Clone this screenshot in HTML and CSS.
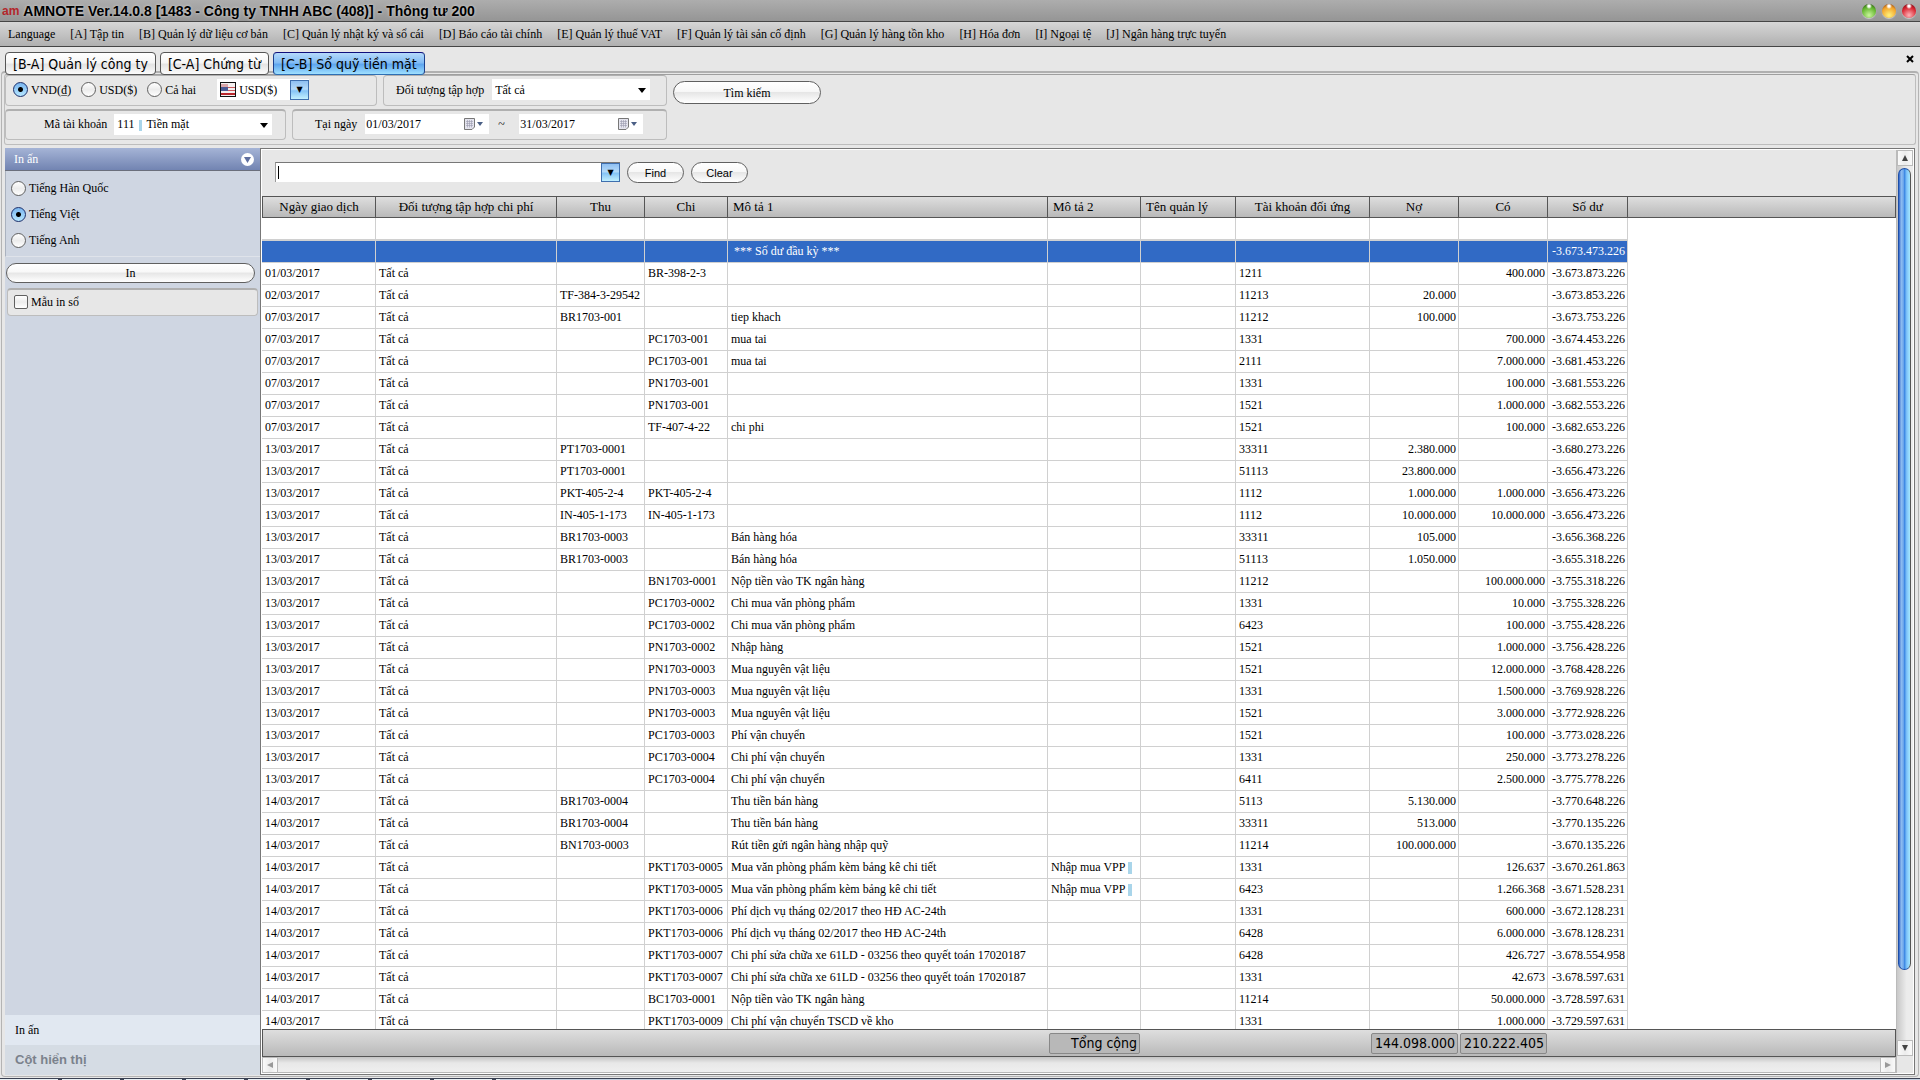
FILE: index.html
```
<!DOCTYPE html>
<html lang="vi">
<head>
    <meta charset="utf-8">
    <title>AMNOTE Ver.14.0.8</title>
    <link rel="stylesheet" href="styles.css">
    <script src="script.js"></script>
</head>
<body>
    <header class="titleBar">
        <span class="logo">am</span>
        <h1>AMNOTE Ver.14.0.8 [1483 - Công ty TNHH ABC (408)] - Thông tư 200</h1>
        <button class="orb green" aria-label="Minimize"></button>
        <button class="orb yellow" aria-label="Maximize"></button>
        <button class="orb red" aria-label="Close"></button>
    </header>

    <nav class="menu">
        <a href="#">Language</a>
        <a href="#">[A] Tập tin</a>
        <a href="#">[B] Quản lý dữ liệu cơ bản</a>
        <a href="#">[C] Quản lý nhật ký và sổ cái</a>
        <a href="#">[D] Báo cáo tài chính</a>
        <a href="#">[E] Quản lý thuế VAT</a>
        <a href="#">[F] Quản lý tài sản cố định</a>
        <a href="#">[G] Quản lý hàng tồn kho</a>
        <a href="#">[H] Hóa đơn</a>
        <a href="#">[I] Ngoại tệ</a>
        <a href="#">[J] Ngân hàng trực tuyến</a>
    </nav>

    <div class="tabs">
        <button class="tab">[B-A] Quản lý công ty</button>
        <button class="tab">[C-A] Chứng từ</button>
        <button class="tab active">[C-B] Sổ quỹ tiền mặt</button>
        <button class="closeTab" aria-label="Close tab">
            <svg width="8" height="8" viewBox="0 0 8 8"><path d="M1 1L7 7M7 1L1 7" stroke="#000" stroke-width="2"/></svg>
        </button>
    </div>

    <main class="page">
        <form class="filters">
            <div class="filterRow">
                <div class="group currency">
                    <label><input type="radio" name="currency" checked>VND(₫)</label>
                    <label><input type="radio" name="currency">USD($)</label>
                    <label><input type="radio" name="currency">Cả hai</label>
                    <div class="combo flagCombo">
                        <svg class="flag" width="16" height="15" viewBox="0 0 16 15">
                            <rect width="16" height="15" fill="#111"/>
                            <rect x="1" y="1" width="14" height="13" fill="#f4f0f0"/>
                            <path d="M1 2H8V5H1Z" fill="#d9a5a8"/>
                            <path d="M1 12H15" stroke="#b9262c" stroke-width="2"/>
                            <path d="M8 5.500H15M8 8.500H15" stroke="#c9585c"/>
                            <rect x="1" y="5" width="7" height="4" fill="#4a5a94"/>
                        </svg>
                        <select aria-label="Ngoại tệ"><option>USD($)</option></select>
                        <span class="blueArrow">▼</span>
                    </div>
                </div>
                <div class="group target">
                    <label for="target">Đối tượng tập hợp</label>
                    <div class="combo wide">
                        <select id="target"><option>Tất cả</option></select>
                        <span class="arrow"></span>
                    </div>
                </div>
            </div>
            <div class="filterRow">
                <div class="group account">
                    <label for="account">Mã tài khoản</label>
                    <div class="combo wide">
                        <select id="account" class="barred"><option>111&nbsp;&nbsp;&nbsp;&nbsp;Tiền mặt</option></select>
                        <span class="arrow"></span>
                    </div>
                </div>
                <div class="group period">
                    <label for="dateFrom">Tại ngày</label>
                    <div class="date">
                        <input type="text" id="dateFrom" value="01/03/2017">
                        <svg width="19" height="13" viewBox="0 0 19 13">
                            <path d="M.5 .5H10.500V9L8 11.500H.5Z" fill="#e4e4ee" stroke="#777"/>
                            <path d="M2 3.500H9M2 5.500H9M2 7.500H9M3.500 2V9.500M5.500 2V9.500M7.500 2V9.500" stroke="#9a9aae" stroke-width=".6"/>
                            <path d="M13 4H19L16 8Z" fill="#4a5f85"/>
                        </svg>
                    </div>
                    <span class="tilde">~</span>
                    <div class="date">
                        <input type="text" aria-label="Đến ngày" value="31/03/2017">
                        <svg width="19" height="13" viewBox="0 0 19 13">
                            <path d="M.5 .5H10.500V9L8 11.500H.5Z" fill="#e4e4ee" stroke="#777"/>
                            <path d="M2 3.500H9M2 5.500H9M2 7.500H9M3.500 2V9.500M5.500 2V9.500M7.500 2V9.500" stroke="#9a9aae" stroke-width=".6"/>
                            <path d="M13 4H19L16 8Z" fill="#4a5f85"/>
                        </svg>
                    </div>
                </div>
            </div>
            <button type="button" class="pill search">Tìm kiếm</button>
        </form>

        <div class="content">
            <aside class="sidebar">
                <div class="sideHeader">
                    In ấn
                    <svg width="13" height="13" viewBox="0 0 13 13"><circle cx="6.500" cy="6.500" r="6.500" fill="#fff"/><path d="M3 4H10L6.500 10Z" fill="#5f6fa0"/></svg>
                </div>
                <div class="languages">
                    <label><input type="radio" name="lang">Tiếng Hàn Quốc</label>
                    <label><input type="radio" name="lang" checked>Tiếng Việt</label>
                    <label><input type="radio" name="lang">Tiếng Anh</label>
                </div>
                <button class="pill print">In</button>
                <div class="group template">
                    <label><input type="checkbox">Mẫu in sổ</label>
                </div>
                <div class="sideTabs">
                    <button class="sideTab current">In ấn</button>
                    <button class="sideTab">Cột hiển thị</button>
                </div>
            </aside>

            <section class="ledger">
                <div class="ledgerMain">
                    <div class="find">
                        <div class="combo findBox">
                            <input type="text" aria-label="Find">
                            <button class="blueArrow" aria-label="History">▼</button>
                        </div>
                        <button class="pill small">Find</button>
                        <button class="pill small">Clear</button>
                    </div>
                    <div class="rows">
                        <table>
                            <colgroup class="cols"></colgroup>
                            <thead>
                                <tr>
                                    <th>Ngày giao dịch</th>
                                    <th>Đối tượng tập hợp chi phí</th>
                                    <th>Thu</th>
                                    <th>Chi</th>
                                    <th class="left">Mô tả 1</th>
                                    <th class="left">Mô tả 2</th>
                                    <th class="left">Tên quản lý</th>
                                    <th>Tài khoản đối ứng</th>
                                    <th>Nợ</th>
                                    <th>Có</th>
                                    <th>Số dư</th>
                                    <th></th>
                                </tr>
                            </thead>
                            <tbody id="ledgerRows"></tbody>
                        </table>
                    </div>
                    <table class="totals">
                        <colgroup class="cols"></colgroup>
                        <tbody>
                            <tr>
                                <td colspan="5"></td>
                                <td><div class="total">Tổng cộng</div></td>
                                <td colspan="2"></td>
                                <td><div class="total">144.098.000</div></td>
                                <td><div class="total">210.222.405</div></td>
                                <td colspan="2"></td>
                            </tr>
                        </tbody>
                    </table>
                    <div class="hScroll">
                        <button aria-label="Scroll left"><svg width="6" height="6" viewBox="0 0 6 6"><path d="M6 0V6L0 3Z"/></svg></button>
                        <button aria-label="Scroll right"><svg width="6" height="6" viewBox="0 0 6 6"><path d="M0 0V6L6 3Z"/></svg></button>
                    </div>
                </div>
                <div class="vScroll">
                    <button aria-label="Scroll up"><svg width="6" height="6" viewBox="0 0 6 6"><path d="M0 6H6L3 0Z"/></svg></button>
                    <div class="track"><div class="thumb"></div></div>
                    <button aria-label="Scroll down"><svg width="6" height="6" viewBox="0 0 6 6"><path d="M0 0H6L3 6Z"/></svg></button>
                </div>
            </section>
        </div>
    </main>
    <footer class="taskbar"><div></div></footer>
</body>
</html>
```
FILE: styles.css
```
* {
    box-sizing: border-box;
}
body {
    margin: 0;
    height: 100vh;
    display: flex;
    flex-direction: column;
    overflow: hidden;
    background: #e7e7e7;
    color: #000;
    font: 12px/16px "Liberation Serif", serif;
}
button, input, select {
    margin: 0;
    padding: 0;
    border: 0;
    border-radius: 0;
    outline: none;
    color: inherit;
    font: inherit;
    appearance: none;
}
svg {
    display: block;
    flex: none;
}

/* window chrome */
.titleBar {
    display: flex;
    align-items: center;
    gap: 6px;
    height: 22px;
    padding: 0 4px 0 2px;
    border-bottom: 1px solid #454545;
    background: linear-gradient(#adadad, #959595);
}
.logo {
    color: #b3262b;
    font: bold 12px/20px "Liberation Sans", sans-serif;
    margin-right: -2px;
}
.titleBar h1 {
    flex: 1;
    margin: 0;
    font: bold 14px/20px "Liberation Sans", sans-serif;
    text-shadow: 0 0 3px #ddd;
}
.orb {
    width: 14px;
    height: 14px;
    border-radius: 50%;
    box-shadow: 0 1px 1px #ccc;
}
.green {
    background: radial-gradient(circle at 50% 15%, #fff 1px, transparent 3px), radial-gradient(circle at 50% 80%, #c9f59b, #62b52d 60%, #1c3f0e);
}
.yellow {
    background: radial-gradient(circle at 50% 15%, #fff 1px, transparent 3px), radial-gradient(circle at 50% 80%, #fff27c, #f3a52b 60%, #7c2b0c);
}
.red {
    background: radial-gradient(circle at 50% 15%, #fff 1px, transparent 3px), radial-gradient(circle at 50% 80%, #ffb3b8, #d8232f 60%, #5c0710);
}
.menu {
    display: flex;
    gap: 15px;
    height: 25px;
    padding: 4px 8px;
    border-bottom: 1px solid #454545;
    background: linear-gradient(#d6d6d6, #b0b0b0);
}
.menu a {
    color: #000;
    text-decoration: none;
}
.tabs {
    display: flex;
    gap: 4px;
    height: 24px;
    padding: 5px 5px 0;
}
.tab {
    position: relative;
    z-index: 1;
    height: 23px;
    padding: 0 7px;
    border: 1px solid #555;
    border-radius: 4px;
    background: linear-gradient(#fff, #f6f6f6 45%, #e4e4e4 55%, #fbfbfb);
    font: 14px/20px "DejaVu Sans Condensed", "DejaVu Sans", sans-serif;
}
.tab.active {
    border-color: #10107c #1b3f8c #2e6fb4;
    background: linear-gradient(#b5dafb, #84bdf5 45%, #5fa6ef 55%, #9fe0ff);
}
.closeTab {
    height: 14px;
    margin-left: auto;
    padding: 0 1px;
    background: none;
}

/* filters */
.page {
    flex: 1;
    min-height: 0;
    display: flex;
    flex-direction: column;
    margin: 0 1px;
    padding: 1px 3px;
    border: 1px solid #b4b4b4;
    border-top: 2px solid #b0b0b0;
    border-radius: 4px;
}
.filters {
    position: relative;
    display: flex;
    flex-direction: column;
    gap: 3px;
    height: 71px;
    margin: 0 -1px 3px;
    border: 1px solid #bdbdbd;
    border-top-color: #9f9f9f;
    border-radius: 3px;
}
.filterRow {
    display: flex;
    gap: 6px;
}
.group {
    display: flex;
    align-items: center;
    height: 31px;
    padding-bottom: 2px;
    border: 1px solid #bdbdbd;
    border-top: 2px solid #b0b0b0;
    border-radius: 4px;
    background: #e7e7e7;
}
.filterRow:first-child .group {
    border-top-width: 1px;
}
.currency {
    width: 372px;
    padding-left: 7px;
}
.target {
    width: 284px;
    padding-left: 12px;
    gap: 8px;
}
.account {
    width: 281px;
    padding-left: 38px;
    gap: 7px;
}
.period {
    width: 375px;
    padding-left: 22px;
}
.period label {
    margin-right: 8px;
}
.currency label, .languages label, .template label {
    display: flex;
    align-items: center;
    gap: 3px;
}
.currency label {
    margin-right: 10px;
}
input[type="radio"] {
    width: 15px;
    height: 15px;
    border: 1px solid #606060;
    border-radius: 50%;
    background: linear-gradient(#fff, #ececec 50%, #fff);
}
input[type="radio"]:checked {
    border-color: #1b2f6b;
    background: radial-gradient(circle, #000 2px, transparent 3px), linear-gradient(#7ab6f0, #b5e6ff);
}
input[type="checkbox"] {
    width: 14px;
    height: 14px;
    border: 1px solid #606060;
    border-radius: 2px;
    background: linear-gradient(#fff, #ececec 50%, #fff);
}
.combo {
    position: relative;
    display: flex;
    height: 21px;
    background: #fff;
}
.combo select {
    flex: 1;
    min-width: 0;
    padding: 0 3px;
    background: #fff;
}
.combo.wide {
    width: 158px;
}
.combo select.barred {
    background: linear-gradient(#a9d5ea, #a9d5ea) 25px 6px / 3px 11px no-repeat #fff;
}
.arrow {
    position: absolute;
    right: 4px;
    top: 9px;
    border: 4px solid transparent;
    border-top: 5px solid #000;
    border-bottom: 0;
}
.flagCombo {
    width: 92px;
    margin-left: 11px;
    padding-left: 3px;
    align-items: center;
}
.blueArrow {
    width: 19px;
    height: 20px;
    border: 1px solid #3f6fae;
    background: linear-gradient(#8fc0f2, #b4dafa 45%, #86c4f6 55%, #c2f0ff);
    font: 8px/18px "DejaVu Sans", sans-serif;
    text-align: center;
}
.date {
    display: flex;
    align-items: center;
    width: 124px;
    height: 20px;
    padding: 0 6px 0 1px;
    background: #fff;
}
.date input {
    flex: 1;
    min-width: 0;
}
.tilde {
    width: 30px;
    padding-left: 9px;
}
.pill {
    border: 1px solid #606060;
    border-radius: 12px;
    background: linear-gradient(#fff, #f8f8f8 45%, #e6e6e6 50%, #fff);
    text-align: center;
}
.search {
    position: absolute;
    left: 668px;
    top: 6px;
    width: 148px;
    height: 23px;
}

/* sidebar */
.content {
    flex: 1;
    min-height: 0;
    display: flex;
}
.sidebar {
    display: flex;
    flex-direction: column;
    width: 255px;
    background: #cfd6e2;
}
.sideHeader {
    display: flex;
    align-items: center;
    justify-content: space-between;
    height: 23px;
    padding: 0 6px 0 9px;
    border-bottom: 1px solid #6b6f7c;
    background: linear-gradient(#a5b4d6, #7284b2);
    color: #fff;
}
.languages {
    display: flex;
    flex-direction: column;
    gap: 10px;
    height: 86px;
    padding: 9px 5px;
    border-left: 1px solid #aab2bf;
    border-bottom: 1px solid #dfe3ea;
}
.print {
    height: 20px;
    margin: 6px 5px 5px 1px;
}
.template {
    height: 28px;
    margin: 0 2px;
    padding-left: 6px;
}
.sideTabs {
    display: flex;
    flex-direction: column;
    margin-top: auto;
}
.sideTab {
    height: 30px;
    padding-left: 10px;
    background: #d5dce4;
    color: #7b828c;
    font: bold 13px/16px "Liberation Sans", sans-serif;
    text-align: left;
}
.sideTab.current {
    background: #e1e8f1;
    color: #000;
    font: 12px/16px "Liberation Serif", serif;
}

/* ledger */
.ledger {
    flex: 1;
    min-width: 0;
    display: flex;
    border: 1px solid #777;
    padding: 1px;
    background: #fff;
}
.ledgerMain {
    flex: 1;
    min-width: 0;
    display: flex;
    flex-direction: column;
}
.find {
    display: flex;
    gap: 7px;
    height: 46px;
    padding: 12px 13px;
    background: #e7e7e7;
}
.findBox {
    width: 345px;
    height: 20px;
    border-top: 1px solid #777;
    border-left: 1px solid #999;
}
.findBox input {
    flex: 1;
    background: linear-gradient(#000, #000) 2px 3px / 1px 13px no-repeat #fff;
}
.findBox .blueArrow {
    height: 19px;
}
.small {
    width: 57px;
    height: 21px;
    font: 11px/16px "Liberation Sans", sans-serif;
}
.rows {
    flex: 1;
    min-height: 0;
    overflow: hidden;
}
table {
    width: 100%;
    table-layout: fixed;
    border-collapse: separate;
    border-spacing: 0;
}
th {
    height: 22px;
    padding: 0 5px;
    border: 1px solid #555;
    border-left: 0;
    background: linear-gradient(#dedede, #b9b9b9);
    font-size: 13px;
    font-weight: normal;
    line-height: 18px;
}
th:first-child {
    border-left: 1px solid #555;
}
th.left {
    text-align: left;
}
.rows td {
    height: 22px;
    padding: 0 2px 2px 3px;
    border-right: 1px solid #d0d0d0;
    border-bottom: 1px solid #d0d0d0;
    line-height: 16px;
    white-space: pre;
}
.rows td:last-child {
    border: 0;
}
.rows .filterLine td {
    height: 23px;
    border-bottom-width: 2px;
}
.rows .filterLine td:last-child {
    border: 0;
}
.rows .selected td {
    background: #316ac5;
    color: #fff;
}
.rows .selected td:last-child {
    background: none;
}
.rows .num {
    text-align: right;
}
.bar {
    display: inline-block;
    width: 4px;
    height: 12px;
    margin-left: 3px;
    background: #a9d5ea;
    vertical-align: middle;
}
.totals {
    height: 28px;
    border: 1px solid #555;
    background: linear-gradient(#dedede, #b9b9b9);
}
.totals td {
    padding: 0 2px 0 0;
}
.total {
    height: 21px;
    padding-right: 2px;
    border: 1px solid #888;
    border-radius: 2px;
    background: #b8b8b8;
    font: 14px/19px "DejaVu Sans Condensed", "DejaVu Sans", sans-serif;
    text-align: right;
}
.hScroll {
    display: flex;
    justify-content: space-between;
    height: 16px;
    background: linear-gradient(#c4c4c4, #e8e8e8 40%, #efefef);
    border-bottom: 1px solid #b8b8b8;
}
.hScroll button, .vScroll button {
    display: flex;
    align-items: center;
    justify-content: center;
    width: 16px;
    height: 16px;
    border: 1px solid #bbb;
    background: linear-gradient(90deg, #fafafa, #ececec 50%, #fafafa);
    fill: #444;
}
.hScroll button {
    fill: #999;
}
.vScroll {
    display: flex;
    flex-direction: column;
    width: 17px;
    padding-bottom: 17px;
    border-left: 1px solid #bbb;
    background: #e7e7e7;
}
.track {
    flex: 1;
    padding: 2px 2px 0 1px;
    background: linear-gradient(90deg, #c8c8c8, #ececec 60%);
}
.thumb {
    width: 13px;
    height: 92%;
    border: 1px solid #1d4fa8;
    border-right-color: #555;
    border-radius: 7px;
    background: linear-gradient(90deg, #2f62c8, #8fbdf0 20%, #6fa8ec 40%, #3f8ae4 50%, #7fc4fa 70%, #a5e8ff);
}
.taskbar {
    height: 3px;
    padding-top: 1px;
}
.taskbar div {
    height: 2px;
    border-top: 1px solid #3b4253;
    background: repeating-linear-gradient(90deg, #e8f0f4 0 58px, #3b4253 58px 62px) 0 0 / 500px 1px no-repeat #c3d0e0;
}
```
FILE: script.js
```
"use strict"
window.addEventListener("load", () => {

    const widths = [114, 181, 88, 83, 320, 93, 95, 134, 89, 89, 80]

    // date, thu, chi, mo ta 1, mo ta 2, tai khoan, no, co, so du
    const rows = [
        ["01/03/2017", "", "BR-398-2-3", "", "", "1211", "", "400.000", "-3.673.873.226"],
        ["02/03/2017", "TF-384-3-29542", "", "", "", "11213", "20.000", "", "-3.673.853.226"],
        ["07/03/2017", "BR1703-001", "", "tiep khach", "", "11212", "100.000", "", "-3.673.753.226"],
        ["07/03/2017", "", "PC1703-001", "mua tai", "", "1331", "", "700.000", "-3.674.453.226"],
        ["07/03/2017", "", "PC1703-001", "mua tai", "", "2111", "", "7.000.000", "-3.681.453.226"],
        ["07/03/2017", "", "PN1703-001", "", "", "1331", "", "100.000", "-3.681.553.226"],
        ["07/03/2017", "", "PN1703-001", "", "", "1521", "", "1.000.000", "-3.682.553.226"],
        ["07/03/2017", "", "TF-407-4-22", "chi phi", "", "1521", "", "100.000", "-3.682.653.226"],
        ["13/03/2017", "PT1703-0001", "", "", "", "33311", "2.380.000", "", "-3.680.273.226"],
        ["13/03/2017", "PT1703-0001", "", "", "", "51113", "23.800.000", "", "-3.656.473.226"],
        ["13/03/2017", "PKT-405-2-4", "PKT-405-2-4", "", "", "1112", "1.000.000", "1.000.000", "-3.656.473.226"],
        ["13/03/2017", "IN-405-1-173", "IN-405-1-173", "", "", "1112", "10.000.000", "10.000.000", "-3.656.473.226"],
        ["13/03/2017", "BR1703-0003", "", "Bán hàng hóa", "", "33311", "105.000", "", "-3.656.368.226"],
        ["13/03/2017", "BR1703-0003", "", "Bán hàng hóa", "", "51113", "1.050.000", "", "-3.655.318.226"],
        ["13/03/2017", "", "BN1703-0001", "Nộp tiền vào TK ngân hàng", "", "11212", "", "100.000.000", "-3.755.318.226"],
        ["13/03/2017", "", "PC1703-0002", "Chi mua văn phòng phẩm", "", "1331", "", "10.000", "-3.755.328.226"],
        ["13/03/2017", "", "PC1703-0002", "Chi mua văn phòng phẩm", "", "6423", "", "100.000", "-3.755.428.226"],
        ["13/03/2017", "", "PN1703-0002", "Nhập hàng", "", "1521", "", "1.000.000", "-3.756.428.226"],
        ["13/03/2017", "", "PN1703-0003", "Mua nguyên vật liệu", "", "1521", "", "12.000.000", "-3.768.428.226"],
        ["13/03/2017", "", "PN1703-0003", "Mua nguyên vật liệu", "", "1331", "", "1.500.000", "-3.769.928.226"],
        ["13/03/2017", "", "PN1703-0003", "Mua nguyên vật liệu", "", "1521", "", "3.000.000", "-3.772.928.226"],
        ["13/03/2017", "", "PC1703-0003", "Phí vận chuyển", "", "1521", "", "100.000", "-3.773.028.226"],
        ["13/03/2017", "", "PC1703-0004", "Chi phí vận chuyển", "", "1331", "", "250.000", "-3.773.278.226"],
        ["13/03/2017", "", "PC1703-0004", "Chi phí vận chuyển", "", "6411", "", "2.500.000", "-3.775.778.226"],
        ["14/03/2017", "BR1703-0004", "", "Thu tiền bán hàng", "", "5113", "5.130.000", "", "-3.770.648.226"],
        ["14/03/2017", "BR1703-0004", "", "Thu tiền bán hàng", "", "33311", "513.000", "", "-3.770.135.226"],
        ["14/03/2017", "BN1703-0003", "", "Rút tiền gửi ngân hàng nhập quỹ", "", "11214", "100.000.000", "", "-3.670.135.226"],
        ["14/03/2017", "", "PKT1703-0005", "Mua văn phòng phẩm kèm bảng kê chi tiết", "Nhập mua VPP", "1331", "", "126.637", "-3.670.261.863"],
        ["14/03/2017", "", "PKT1703-0005", "Mua văn phòng phẩm kèm bảng kê chi tiết", "Nhập mua VPP", "6423", "", "1.266.368", "-3.671.528.231"],
        ["14/03/2017", "", "PKT1703-0006", "Phí dịch vụ tháng 02/2017 theo HĐ AC-24th", "", "1331", "", "600.000", "-3.672.128.231"],
        ["14/03/2017", "", "PKT1703-0006", "Phí dịch vụ tháng 02/2017 theo HĐ AC-24th", "", "6428", "", "6.000.000", "-3.678.128.231"],
        ["14/03/2017", "", "PKT1703-0007", "Chi phí sửa chữa xe 61LD - 03256 theo quyết toán 17020187", "", "6428", "", "426.727", "-3.678.554.958"],
        ["14/03/2017", "", "PKT1703-0007", "Chi phí sửa chữa xe 61LD - 03256 theo quyết toán 17020187", "", "1331", "", "42.673", "-3.678.597.631"],
        ["14/03/2017", "", "BC1703-0001", "Nộp tiền vào TK ngân hàng", "", "11214", "", "50.000.000", "-3.728.597.631"],
        ["14/03/2017", "", "PKT1703-0009", "Chi phí vận chuyển TSCD về kho", "", "1331", "", "1.000.000", "-3.729.597.631"],
    ]

    document.querySelectorAll(".cols").forEach(group => {
        widths.forEach(width => {
            const col = document.createElement("col")
            col.style.width = `${width}px`
            group.appendChild(col)
        })
        group.appendChild(document.createElement("col"))
    })

    const addRow = (cells, className) => {
        const row = document.createElement("tr")
        row.className = className
        cells.forEach((text, i) => {
            const cell = document.createElement("td")
            cell.textContent = text
            if (i >= 8) cell.className = "num"
            if (i === 5 && text) {
                const bar = document.createElement("span")
                bar.className = "bar"
                cell.appendChild(bar)
            }
            row.appendChild(cell)
        })
        document.getElementById("ledgerRows").appendChild(row)
    }

    addRow(Array(12).fill(""), "filterLine")
    addRow(["", "", "", "", " *** Số dư đầu kỳ ***", "", "", "", "", "", "-3.673.473.226", ""], "selected")
    rows.forEach(([date, thu, chi, desc, desc2, account, debit, credit, balance]) => {
        addRow([date, "Tất cả", thu, chi, desc, desc2, "", account, debit, credit, balance, ""], "")
    })
})
```
